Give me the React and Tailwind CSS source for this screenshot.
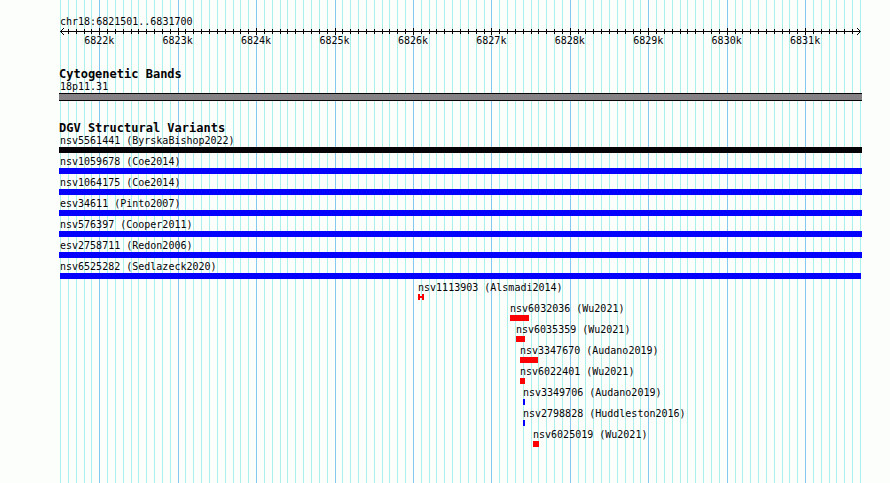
import React from 'react';

// Visible region, in base pairs
const REGION = { chrom: 'chr18', start: 6821501, end: 6831700 };
const SPAN = REGION.end - REGION.start + 1;

const percent = (bp) => ((bp - REGION.start + 1) / SPAN) * 100;

const FULL = { start: REGION.start - 1, end: REGION.end };

const variants = [
  { id: 'nsv5561441', study: 'ByrskaBishop2022', ...FULL, clipped: true, kind: 'complex' },
  { id: 'nsv1059678', study: 'Coe2014', ...FULL, clipped: true, kind: 'gain' },
  { id: 'nsv1064175', study: 'Coe2014', ...FULL, clipped: true, kind: 'gain' },
  { id: 'esv34611', study: 'Pinto2007', ...FULL, clipped: true, kind: 'gain' },
  { id: 'nsv576397', study: 'Cooper2011', ...FULL, clipped: true, kind: 'gain' },
  { id: 'esv2758711', study: 'Redon2006', ...FULL, clipped: true, kind: 'gain' },
  { id: 'nsv6525282', study: 'Sedlazeck2020', start: FULL.start, end: FULL.end + 12, kind: 'gain' },
  { id: 'nsv1113903', study: 'Alsmadi2014', start: 6826065, end: 6826141, kind: 'span' },
  { id: 'nsv6032036', study: 'Wu2021', start: 6827238, end: 6827480, kind: 'loss' },
  { id: 'nsv6035359', study: 'Wu2021', start: 6827314, end: 6827429, kind: 'loss' },
  { id: 'nsv3347670', study: 'Audano2019', start: 6827365, end: 6827595, kind: 'loss' },
  { id: 'nsv6022401', study: 'Wu2021', start: 6827365, end: 6827429, kind: 'loss' },
  { id: 'nsv3349706', study: 'Audano2019', start: 6827403, end: 6827429, kind: 'gain' },
  { id: 'nsv2798828', study: 'Huddleston2016', start: 6827403, end: 6827429, kind: 'gain' },
  { id: 'nsv6025019', study: 'Wu2021', start: 6827531, end: 6827607, kind: 'loss' },
];

const barColors = {
  complex: 'bg-[#040204]',
  gain: 'bg-[#0402fc]',
  loss: 'bg-[#fc0204]',
};

// One tick every 100 bp, a major one every 1000 bp
const ticks = [];
for (let bp = REGION.start - 1; bp <= REGION.end; bp += 100) {
  ticks.push({ bp, major: bp % 1000 === 0 });
}

const GridLines = () => (
  <svg
    className="pointer-events-none absolute inset-0 h-full w-full overflow-visible"
    shapeRendering="crispEdges"
    aria-hidden="true"
  >
    {ticks.map(({ bp, major }) => (
      <rect
        key={bp}
        x={`${percent(bp)}%`}
        y="0"
        width="1"
        height="100%"
        fill={major ? '#84caf0' : '#acf0ec'}
      />
    ))}
  </svg>
);

const Ruler = () => (
  <svg className="block h-5 w-full overflow-visible" fill="#040204" role="img" aria-label="Scale">
    <g shapeRendering="crispEdges">
      <rect x="0" y="4" width="100%" height="1" />
      {ticks.slice(1, -1).map(({ bp, major }) => (
        <rect
          key={bp}
          x={`${percent(bp)}%`}
          y={major ? 1 : 2}
          width="1"
          height={major ? 7 : 5}
        />
      ))}
    </g>
    <path d="M4 1 L0.5 4.5 L4 8" fill="none" stroke="#040204" />
    <svg x="100%" className="overflow-visible">
      <path d="M-3 1 L0.5 4.5 L-3 8" fill="none" stroke="#040204" />
    </svg>
    {ticks
      .filter((tick) => tick.major)
      .map(({ bp }) => (
        <text key={bp} x={`${percent(bp)}%`} y="17" textAnchor="middle">
          {bp / 1000}k
        </text>
      ))}
  </svg>
);

const TrackTitle = ({ children }) => (
  <h2 className="text-[12px] leading-3 font-bold">{children}</h2>
);

const Variant = ({ variant }) => {
  const { id, study, start, end, clipped, kind } = variant;
  const left = `${percent(start)}%`;
  const width = `${percent(end) - percent(start)}%`;

  return (
    <li className="h-[21px]">
      <div className="h-[13px] leading-[14px] whitespace-nowrap" style={{ marginLeft: left }}>
        {id} ({study})
      </div>
      {kind === 'span' ? (
        <svg className="block h-[6px] overflow-visible" style={{ marginLeft: left, width }} shapeRendering="crispEdges">
          <path d="M0 0h2v2h2v-2h2v6h-2v-2h-2v2h-2z" fill="#fc0204" />
        </svg>
      ) : clipped ? (
        <div className={`-mr-[2px] -ml-px h-[6px] ${barColors[kind]}`} />
      ) : (
        <div className={`h-[6px] ${barColors[kind]}`} style={{ marginLeft: left, width }} />
      )}
    </li>
  );
};

const App = () => (
  <div className="flex min-h-screen flex-col bg-[#fcfefc] pr-[30px] pl-[60px] font-['DejaVu_Sans_Mono','Liberation_Mono',monospace] text-[10px] text-[#040204]">
    <main className="relative flex-1 pt-4">
      <GridLines />
      <div className="relative">
        <h1 className="h-[11px] leading-3">
          {REGION.chrom}:{REGION.start}..{REGION.end}
        </h1>
        <Ruler />

        <section className="-ml-px pt-[21px]">
          <TrackTitle>Cytogenetic Bands</TrackTitle>
          <div className="h-[13px] pl-px leading-[14px]">18p11.31</div>
          <div className="-mr-[2px] h-2 border-y border-[#040204] bg-[#848284]" />
        </section>

        <section className="pt-[21px]">
          <div className="-ml-px">
            <TrackTitle>DGV Structural Variants</TrackTitle>
          </div>
          <ul>
            {variants.map((variant) => (
              <Variant key={variant.id} variant={variant} />
            ))}
          </ul>
        </section>
      </div>
    </main>
  </div>
);

export default App;
